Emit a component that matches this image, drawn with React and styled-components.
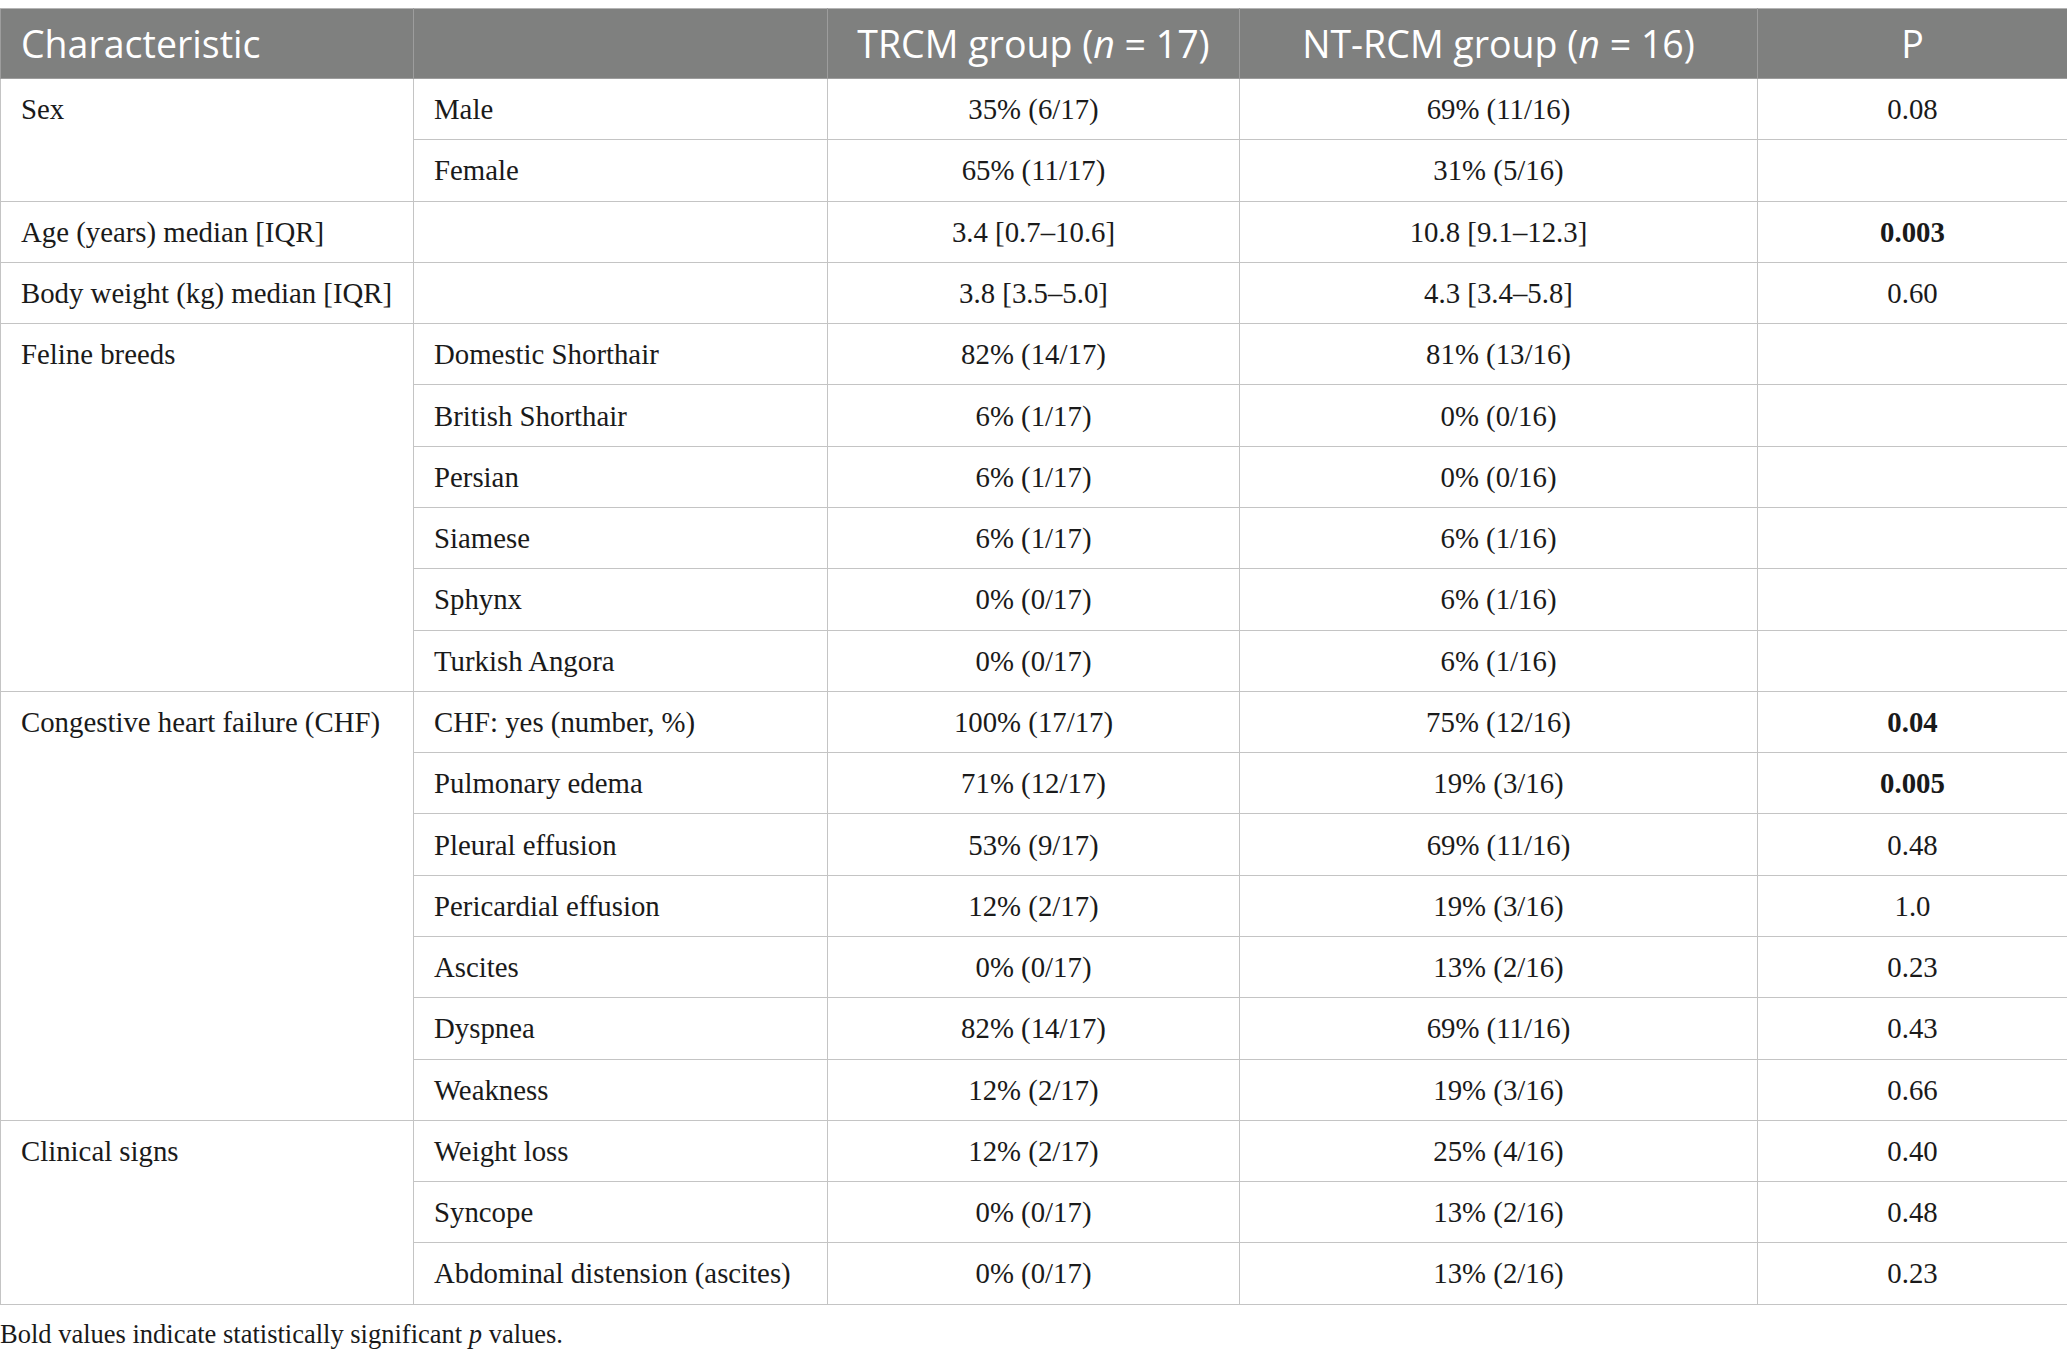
import React from "react";
import styled, { createGlobalStyle } from "styled-components";

const GlobalStyle = createGlobalStyle`
  html, body {
    margin: 0;
    padding: 0;
    background: #ffffff;
  }
  body {
    font-family: "Liberation Serif", "Times New Roman", serif;
    color: #1a1a1a;
  }
`;

const Page = styled.div`
  padding-top: 8px;
  width: 2067px;
`;

const Table = styled.table`
  width: 2067px;
  border-collapse: collapse;
  table-layout: fixed;
  border: 1px solid #c2c2c2;
`;

const HeadRow = styled.tr`
  background: #7f807f;
  height: 70px;
`;

const HeadCell = styled.th`
  font-family: "Open Sans", "Liberation Sans", sans-serif;
  font-weight: 400;
  font-size: 37.5px;
  color: #ffffff;
  text-align: ${(p) => p.$align || "center"};
  padding: 0 ${(p) => (p.$align === "left" ? "20px" : "8px")};
  border: 1px solid #9d9d9d;
  border-top-color: #b4b4b4;
  white-space: nowrap;
  line-height: 1;
`;

const Cell = styled.td`
  font-size: 28.8px;
  line-height: 40px;
  height: 40px;
  padding: 10.15px ${(p) => (p.$align === "center" ? "8px" : "20px")};
  text-align: ${(p) => p.$align || "left"};
  font-weight: ${(p) => (p.$bold ? 700 : 400)};
  vertical-align: top;
  border: 1px solid #c4c4c4;
  white-space: nowrap;
`;

const Note = styled.p`
  margin: 11px 0 0 0;
  font-size: 26.5px;
  line-height: 36px;
  color: #1a1a1a;
`;

const groups = [
  {
    name: "Sex",
    rows: [
      ["Male", "35% (6/17)", "69% (11/16)", "0.08"],
      ["Female", "65% (11/17)", "31% (5/16)", ""],
    ],
  },
  {
    name: "Age (years) median [IQR]",
    rows: [["", "3.4 [0.7–10.6]", "10.8 [9.1–12.3]", "0.003", true]],
  },
  {
    name: "Body weight (kg) median [IQR]",
    rows: [["", "3.8 [3.5–5.0]", "4.3 [3.4–5.8]", "0.60"]],
  },
  {
    name: "Feline breeds",
    rows: [
      ["Domestic Shorthair", "82% (14/17)", "81% (13/16)", ""],
      ["British Shorthair", "6% (1/17)", "0% (0/16)", ""],
      ["Persian", "6% (1/17)", "0% (0/16)", ""],
      ["Siamese", "6% (1/17)", "6% (1/16)", ""],
      ["Sphynx", "0% (0/17)", "6% (1/16)", ""],
      ["Turkish Angora", "0% (0/17)", "6% (1/16)", ""],
    ],
  },
  {
    name: "Congestive heart failure (CHF)",
    rows: [
      ["CHF: yes (number, %)", "100% (17/17)", "75% (12/16)", "0.04", true],
      ["Pulmonary edema", "71% (12/17)", "19% (3/16)", "0.005", true],
      ["Pleural effusion", "53% (9/17)", "69% (11/16)", "0.48"],
      ["Pericardial effusion", "12% (2/17)", "19% (3/16)", "1.0"],
      ["Ascites", "0% (0/17)", "13% (2/16)", "0.23"],
      ["Dyspnea", "82% (14/17)", "69% (11/16)", "0.43"],
      ["Weakness", "12% (2/17)", "19% (3/16)", "0.66"],
    ],
  },
  {
    name: "Clinical signs",
    rows: [
      ["Weight loss", "12% (2/17)", "25% (4/16)", "0.40"],
      ["Syncope", "0% (0/17)", "13% (2/16)", "0.48"],
      ["Abdominal distension (ascites)", "0% (0/17)", "13% (2/16)", "0.23"],
    ],
  },
];

const App = () => {
  return (
    <Page>
      <GlobalStyle />
      <Table>
        <colgroup>
          <col style={{ width: 413 }} />
          <col style={{ width: 414 }} />
          <col style={{ width: 412 }} />
          <col style={{ width: 518 }} />
          <col style={{ width: 310 }} />
        </colgroup>
        <thead>
          <HeadRow>
            <HeadCell $align="left">Characteristic</HeadCell>
            <HeadCell />
            <HeadCell>
              TRCM group (<i>n</i> = 17)
            </HeadCell>
            <HeadCell>
              NT-RCM group (<i>n</i> = 16)
            </HeadCell>
            <HeadCell>P</HeadCell>
          </HeadRow>
        </thead>
        <tbody>
          {groups.map((g) =>
            g.rows.map((r, i) => (
              <tr key={g.name + i}>
                {i === 0 && <Cell rowSpan={g.rows.length}>{g.name}</Cell>}
                <Cell>{r[0]}</Cell>
                <Cell $align="center">{r[1]}</Cell>
                <Cell $align="center">{r[2]}</Cell>
                <Cell $align="center" $bold={r[4]}>
                  {r[3]}
                </Cell>
              </tr>
            ))
          )}
        </tbody>
      </Table>
      <Note>
        Bold values indicate statistically significant <i>p</i> values.
      </Note>
    </Page>
  );
};

export default App;
